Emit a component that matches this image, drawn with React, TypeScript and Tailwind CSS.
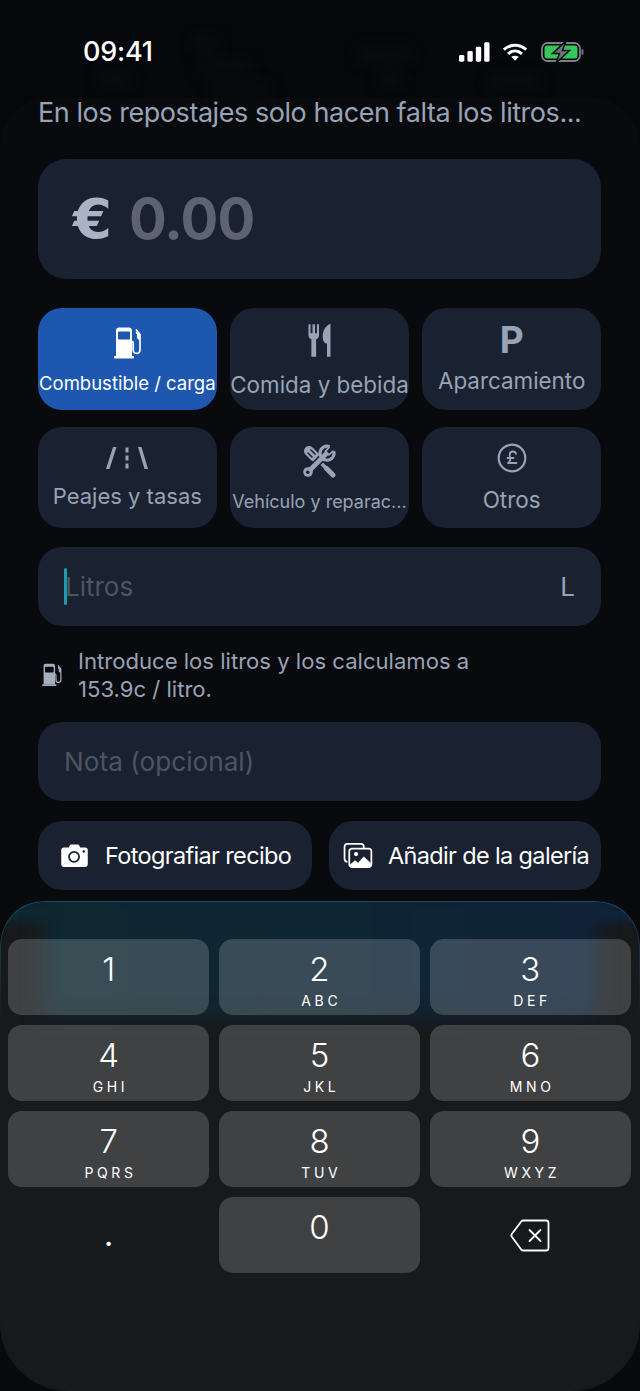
import type { ReactNode } from "react";

const FONT = "font-['Inter','Liberation_Sans',sans-serif]";

function FuelIcon({ className }: { className?: string }) {
  return (
    <svg viewBox="0 0 32 32" className={className} fill="currentColor">
      <path
        fillRule="evenodd"
        d="M5 3.500C5 1.800 6.300.5 8 .5h10c1.700 0 3 1.300 3 3V29H5V3.500ZM8 4.500c-.6 0-1 .4-1 1v6c0 .6.4 1 1 1h10c.6 0 1-.4 1-1v-6c0-.6-.4-1-1-1H8Z"
      />
      <rect x="3" y="29" width="20" height="2.400" rx="1" />
      <path
        d="M25 2.500 29 7.500v15.500a3.400 3.400 0 0 1-6.800 0v-7a2 2 0 0 0-1.200-1.800"
        fill="none"
        stroke="currentColor"
        strokeWidth="1.700"
      />
      <path d="M25.500 4.500 29 8v5l-1.500-.5c-1-.4-1.500-1.300-1.500-2.300V7.500l-1.500-1.800Z" />
    </svg>
  );
}

function ForkKnifeIcon({ className }: { className?: string }) {
  return (
    <svg viewBox="0 0 24 36" className={className} fill="currentColor">
      <path d="M0.500 1h2.200v9.500h2V1h2.600v9.500h2V1h2.200v11.500c0 2.200-1.300 3.600-3 4.200V35H3.500V16.700C1.800 16.100.5 14.700.5 12.500V1Z" />
      <path d="M23.500 0.500V35h-3.700V21.500c-3-1-4.500-3.500-4.500-7.500C15.300 7.500 18.500 2.500 23.500 0.500Z" />
    </svg>
  );
}

function RoadIcon({ className }: { className?: string }) {
  return (
    <svg viewBox="0 0 42 22" className={className} fill="currentColor">
      <path d="M7 0h3.500L3.500 22H0L7 0Z" />
      <path d="M32 0h3.500L42 22h-3.500L32 0Z" />
      <rect x="19.500" y="0.500" width="3" height="5" />
      <rect x="19.500" y="8.500" width="3" height="5" />
      <rect x="19.500" y="16.500" width="3" height="5" />
    </svg>
  );
}

function ToolsIcon({ className }: { className?: string }) {
  return (
    <svg viewBox="0 0 34 34" className={className} fill="none" stroke="currentColor" strokeLinecap="round">
      {/* espátula */}
      <path d="M7 7l6 6" strokeWidth="10" />
      <path d="M6 9l4 4M9 6l4 4" stroke="#1a2130" strokeWidth="1.600" />
      <path d="M13 13l18 18" strokeWidth="3.600" />
      <path d="M24.500 24.500l6.500 6.500" strokeWidth="5" />
      {/* llave */}
      <path d="M25 9 6 28" stroke="#1a2130" strokeWidth="8" />
      <path d="M24 10 6 28" strokeWidth="4.600" />
      <circle cx="6" cy="28" r="4.800" fill="currentColor" stroke="none" />
      <circle cx="5.800" cy="28.200" r="1.700" fill="#1a2130" stroke="none" />
      <path d="M27.500 2.700A7 7 0 1 0 31.800 7.500" strokeWidth="3.200" strokeLinecap="butt" />
      <path d="M27 3.500l-3.500 3.800 3.500 3.500 4-3.600" strokeWidth="1.800" />
    </svg>
  );
}

function PoundIcon({ className }: { className?: string }) {
  return (
    <svg viewBox="0 0 30 30" className={className} fill="none" stroke="currentColor">
      <circle cx="15" cy="15" r="13.300" strokeWidth="2.200" />
      <path
        d="M19 10.800c-.3-1.500-1.500-2.300-3-2.300-2 0-3.300 1.400-3.300 3.300 0 2.500.8 3.500.4 5.400-.2 1-1 2-2.100 2.800h8.500M10.500 15h6"
        strokeWidth="1.800"
        strokeLinecap="round"
        strokeLinejoin="round"
      />
    </svg>
  );
}

function CameraIcon({ className }: { className?: string }) {
  return (
    <svg viewBox="0 0 30 26" className={className}>
      <path
        fill="currentColor"
        d="M3 4h5.500l1.300-2.500C10.200.8 10.800.5 11.500.5h7c.7 0 1.300.3 1.700 1L21.500 4H27c1.700 0 3 1.300 3 3v16c0 1.700-1.300 3-3 3H3c-1.700 0-3-1.300-3-3V7c0-1.700 1.300-3 3-3Z"
      />
      <circle cx="14.500" cy="14.500" r="5.700" fill="none" stroke="#1a2130" strokeWidth="2" />
      <circle cx="25.500" cy="8.500" r="1.400" fill="#1a2130" />
    </svg>
  );
}

function GalleryIcon({ className }: { className?: string }) {
  return (
    <svg viewBox="0 0 30 26" className={className}>
      <path
        d="M4 19.500C2 19.500 1 18.500 1 16.500V4C1 2 2 1 4 1h14c2 0 3 1 3 3v1.500"
        fill="none"
        stroke="currentColor"
        strokeWidth="1.800"
      />
      <rect x="5.900" y="5.900" width="23" height="19" rx="3" fill="none" stroke="currentColor" strokeWidth="1.800" />
      <circle cx="13" cy="11.500" r="2.200" fill="currentColor" />
      <path
        fill="currentColor"
        d="M6 23l6-5 3 2.500 6-6.500 8 7.500V23c0 1.500-1 3-3 3H9c-2 0-3-1.300-3-3Z"
      />
    </svg>
  );
}

function DeleteIcon({ className }: { className?: string }) {
  return (
    <svg
      viewBox="0 0 40 33"
      className={className}
      fill="none"
      stroke="currentColor"
      strokeWidth="1.800"
      strokeLinecap="round"
      strokeLinejoin="round"
    >
      <path d="M13.500 1.500H36c1.500 0 2.500 1 2.500 2.500v25c0 1.500-1 2.500-2.500 2.500H13.500c-1 0-1.700-.4-2.300-1L2 18c-.8-1-.8-2.200 0-3.200l9.200-12.300c.6-.7 1.300-1 2.300-1Z" />
      <path d="M19.500 11l11 11M30.500 11l-11 11" />
    </svg>
  );
}

function StatusBar() {
  return (
    <div className="relative flex h-[98px] items-start justify-between pl-[83px] pr-[55px] pt-[38px]">
      {/* lo que se adivina borroso detrás de la barra */}
      <div className="absolute left-[195px] top-[38px] h-[14px] w-[22px] bg-[#0c0d11] blur-[7px]" />
      <div className="absolute left-[200px] top-[62px] h-[12px] w-[50px] bg-[#0c0d11] blur-[7px]" />
      <div className="absolute left-[360px] top-[48px] h-[14px] w-[50px] bg-[#0c0d11] blur-[7px]" />
      <div className="absolute left-[100px] top-[72px] h-[14px] w-[30px] bg-[#0c0d11] blur-[7px]" />
      <div className="absolute left-[210px] top-[84px] h-[10px] w-[60px] bg-[#0c0d11] blur-[7px]" />
      <div className="absolute left-[380px] top-[72px] h-[14px] w-[20px] bg-[#0c0d11] blur-[7px]" />
      <div className="absolute left-[490px] top-[76px] h-[12px] w-[50px] bg-[#0c0d11] blur-[7px]" />
      <span className="relative text-[27px] font-medium leading-[28px] tracking-[-0.2px] text-white">09:41</span>
      <div className="relative flex items-center pt-[3px]">
        <svg viewBox="0 0 32 20" className="h-[20px] w-[31px]" fill="white">
          <rect x="0" y="13" width="5.500" height="7" rx="1.500" />
          <rect x="8.700" y="9" width="5.500" height="11" rx="1.500" />
          <rect x="17.400" y="4.500" width="5.500" height="15.500" rx="1.500" />
          <rect x="26" y="0" width="5.500" height="20" rx="1.500" />
        </svg>
        <svg viewBox="0 0 28 20" className="ml-[12px] h-[20px] w-[26px]" fill="none" stroke="white" strokeWidth="3.200">
          <path d="M2 7.500C9 1 19 1 26 7.500" />
          <path d="M6.500 12c4.500-4 10.500-4 15 0" />
          <path d="M14 19.500l-4-4.300c2.400-1.700 5.600-1.700 8 0l-4 4.300Z" fill="white" stroke="none" />
        </svg>
        <svg viewBox="0 0 44 22" className="ml-[13px] h-[22px] w-[44px]">
          <rect x="1" y="2" width="38" height="18" rx="5.500" fill="none" stroke="#7b8088" strokeWidth="1.800" />
          <rect x="3.500" y="4.500" width="33" height="13" rx="3" fill="#34c759" />
          <rect x="40.500" y="8" width="2" height="6" rx="1" fill="#6b7280" />
          <path d="M25 0 11.500 12.500h7L15 22l13.500-12.500h-7L25 0Z" fill="#6b7280" stroke="#0a0c10" strokeWidth="1.500" />
        </svg>
      </div>
    </div>
  );
}

type CategoryProps = {
  icon: ReactNode;
  label: string;
  active?: boolean;
  labelClass: string;
};

function Category({ icon, label, active, labelClass }: CategoryProps) {
  return (
    <div
      className={`flex flex-col items-center overflow-hidden rounded-[24px] ${
        active ? "bg-[#1d57b0] text-white" : "bg-[#1a2130] text-[#98a3b5]"
      }`}
    >
      <div className="flex h-[52px] w-full items-end justify-center">{icon}</div>
      <span className={`whitespace-nowrap ${labelClass}`}>{label}</span>
    </div>
  );
}

const keys = [
  { n: "1", l: "" },
  { n: "2", l: "ABC" },
  { n: "3", l: "DEF" },
  { n: "4", l: "GHI" },
  { n: "5", l: "JKL" },
  { n: "6", l: "MNO" },
  { n: "7", l: "PQRS" },
  { n: "8", l: "TUV" },
  { n: "9", l: "WXYZ" },
];

function Key({ n, l }: { n: string; l: string }) {
  return (
    <div className="flex h-[76px] flex-col items-center rounded-[14px] bg-[#ffffff2d] text-white">
      <span className="mt-[11px] text-[33px] font-light leading-[38px]">{n}</span>
      {l && <span className="mt-[6px] pl-[3.600px] text-[14px] leading-[14px] tracking-[3.600px]">{l}</span>}
    </div>
  );
}

function Keyboard() {
  return (
    <div className="relative mt-[11px] h-[490px] overflow-hidden rounded-t-[44px] rounded-b-[68px] bg-[#18191b] pl-[8px] pr-[9px] pt-[38px]">
      {/* reflejo azul del contenido que queda detrás */}
      <div className="absolute inset-x-0 top-0 h-[22px] bg-gradient-to-r from-[#0e2730] via-[#0e2533] to-[#0f2238] blur-[4px]" />
      <div className="absolute inset-x-[42px] top-[-20px] h-[136px] bg-gradient-to-r from-[#0e2730] via-[#0e2533] to-[#0f2238] blur-[10px]" />
      <div className="absolute inset-x-0 top-0 h-[120px] rounded-t-[44px] border-x border-t border-l-[#14505e] border-r-[#1a3f6e] border-t-[#1b4a68] [mask-image:linear-gradient(#000,transparent)]" />
      <div className="relative grid grid-cols-3 gap-x-[9.500px] gap-y-[10px]">
        {keys.map((k) => (
          <Key key={k.n} n={k.n} l={k.l} />
        ))}
        <div className="flex h-[76px] items-center justify-center pt-[4px] text-[26px] font-bold leading-none text-white">.</div>
        <Key n="0" l="" />
        <div className="flex h-[76px] items-center justify-center">
          <DeleteIcon className="h-[33px] w-[40px] text-white" />
        </div>
      </div>
    </div>
  );
}

export default function App() {
  return (
    <div className={`h-[1391px] w-[640px] overflow-hidden bg-[#06070b] ${FONT}`}>
      <StatusBar />
      <div className="rounded-t-[48px] bg-[#080a0e]">
        <div className="pl-[38px] pr-[39px]">
          <p className="text-[27px] leading-[30px] tracking-[-0.45px] text-[#98a3b5] whitespace-nowrap">
            En los repostajes solo hacen falta los litros...
          </p>

          {/* importe */}
          <div className="mt-[31px] flex h-[120px] items-center rounded-[28px] bg-[#1a2130] pl-[35px]">
            <span className="w-[56px] font-['DejaVu_Sans'] text-[56px] font-bold leading-none text-[#a9b3c4]">€</span>
            <span className="text-[56px] font-bold leading-none tracking-[-0.8px] text-[#5d6370]">0.00</span>
          </div>

          {/* categorías */}
          <div className="mt-[29px] grid grid-cols-3 gap-x-[13.500px] gap-y-[17px] [grid-auto-rows:101.500px]">
            <Category
              active
              icon={<FuelIcon className="h-[34px] w-[32px]" />}
              label="Combustible / carga"
              labelClass="mt-[12px] text-[18.500px] leading-[22px]"
            />
            <Category
              icon={<ForkKnifeIcon className="mb-[2px] h-[35px] w-[23px]" />}
              label="Comida y bebida"
              labelClass="mt-[12px] text-[22.400px] leading-[26px]"
            />
            <Category
              icon={<span className="text-[37px] font-bold leading-[40px]">P</span>}
              label="Aparcamiento"
              labelClass="mt-[8px] text-[22.400px] leading-[26px]"
            />
            <Category
              icon={<RoadIcon className="mb-[10px] h-[22px] w-[42px]" />}
              label="Peajes y tasas"
              labelClass="mt-[4px] text-[22px] leading-[26px]"
            />
            <Category
              icon={<ToolsIcon className="mb-[1px] h-[34px] w-[34px]" />}
              label="Vehículo y reparac..."
              labelClass="mt-[11px] text-[18px] leading-[24px]"
            />
            <Category
              icon={<PoundIcon className="mb-[6px] h-[30px] w-[30px]" />}
              label="Otros"
              labelClass="mt-[8px] text-[22.500px] leading-[26px]"
            />
          </div>

          {/* litros */}
          <div className="mt-[19px] flex h-[79px] items-center justify-between rounded-[24px] bg-[#1a2130] px-[26px] text-[26px]">
            <div className="flex items-center">
              <span className="h-[37px] w-[3px] rounded-full bg-[#1f9bb0]" />
              <span className="ml-[-3px] pl-[1px] text-[#4d5563]">Litros</span>
            </div>
            <span className="text-[#98a3b5]">L</span>
          </div>

          <div className="mt-[20.500px] flex items-center gap-[15px] pl-[2px]">
            <FuelIcon className="h-[24px] w-[23px] text-[#a5afc0]" />
            <p className="text-[22.100px] leading-[28.500px] text-[#98a3b5]">
              Introduce los litros y los calculamos a
              <br />
              153.9c / litro.
            </p>
          </div>

          {/* nota */}
          <div className="mt-[18.500px] flex h-[79px] items-center rounded-[24px] bg-[#1a2130] pl-[26px] text-[26.200px] text-[#4d5563]">
            Nota (opcional)
          </div>

          {/* recibo */}
          <div className="mt-[20px] flex justify-between">
            <div className="flex h-[69px] w-[274px] items-center rounded-[24px] bg-[#1a2130] pl-[22px] text-white">
              <CameraIcon className="h-[23px] w-[29px]" />
              <span className="ml-[16px] text-[23.500px] tracking-[-0.65px] whitespace-nowrap">Fotografiar recibo</span>
            </div>
            <div className="flex h-[69px] w-[272px] items-center rounded-[24px] bg-[#1a2130] pl-[14px] text-white">
              <GalleryIcon className="h-[25px] w-[30px]" />
              <span className="ml-[15px] text-[23.500px] tracking-[-0.65px] whitespace-nowrap">Añadir de la galería</span>
            </div>
          </div>
        </div>
        <Keyboard />
      </div>
    </div>
  );
}
